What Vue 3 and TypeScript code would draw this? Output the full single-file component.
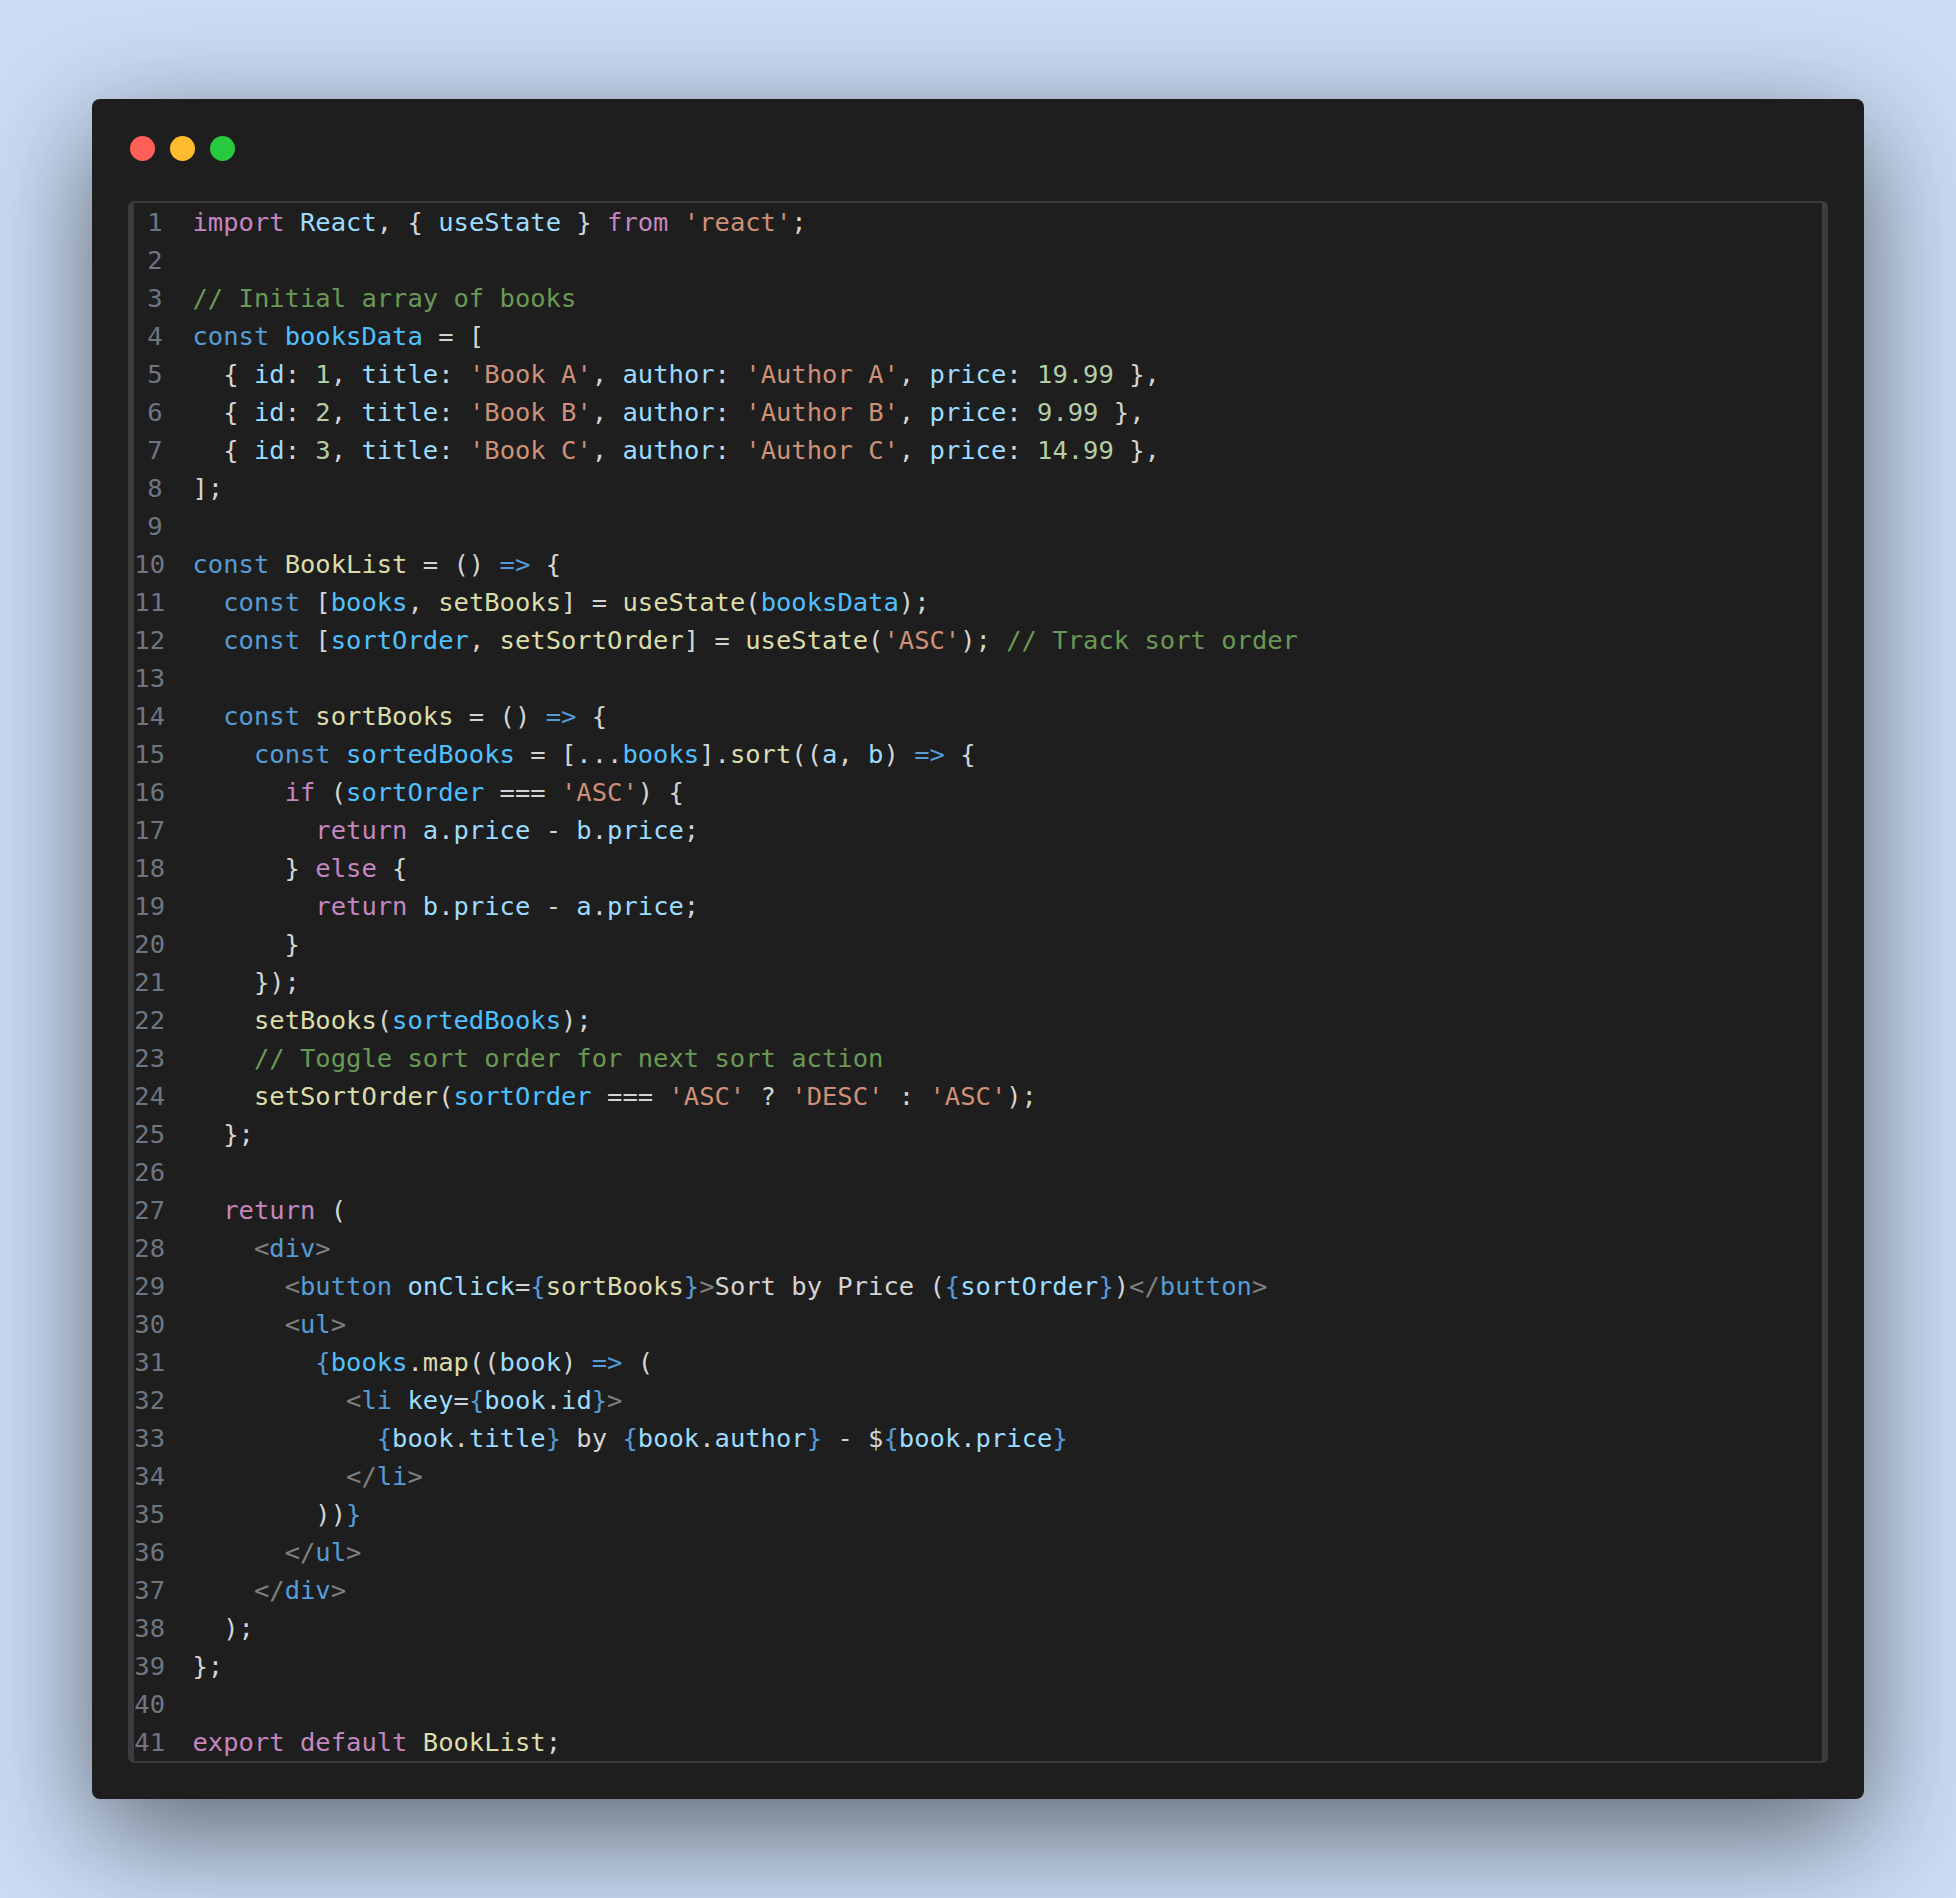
<script setup lang="ts">
type Tok = { c: string; t: string }

const source: string[] = [
  "‹k:import› ‹p:React›, { ‹p:useState› } ‹k:from› ‹s:'react'›;",
  "",
  "‹m:// Initial array of books›",
  "‹b:const› ‹c:booksData› = [",
  "  { ‹p:id›: ‹n:1›, ‹p:title›: ‹s:'Book A'›, ‹p:author›: ‹s:'Author A'›, ‹p:price›: ‹n:19.99› },",
  "  { ‹p:id›: ‹n:2›, ‹p:title›: ‹s:'Book B'›, ‹p:author›: ‹s:'Author B'›, ‹p:price›: ‹n:9.99› },",
  "  { ‹p:id›: ‹n:3›, ‹p:title›: ‹s:'Book C'›, ‹p:author›: ‹s:'Author C'›, ‹p:price›: ‹n:14.99› },",
  "];",
  "",
  "‹b:const› ‹f:BookList› = () ‹b:=>› {",
  "  ‹b:const› [‹c:books›, ‹f:setBooks›] = ‹f:useState›(‹c:booksData›);",
  "  ‹b:const› [‹c:sortOrder›, ‹f:setSortOrder›] = ‹f:useState›(‹s:'ASC'›); ‹m:// Track sort order›",
  "",
  "  ‹b:const› ‹f:sortBooks› = () ‹b:=>› {",
  "    ‹b:const› ‹c:sortedBooks› = [...‹c:books›].‹f:sort›((‹p:a›, ‹p:b›) ‹b:=>› {",
  "      ‹k:if› (‹c:sortOrder› === ‹s:'ASC'›) {",
  "        ‹k:return› ‹p:a›.‹p:price› - ‹p:b›.‹p:price›;",
  "      } ‹k:else› {",
  "        ‹k:return› ‹p:b›.‹p:price› - ‹p:a›.‹p:price›;",
  "      }",
  "    });",
  "    ‹f:setBooks›(‹c:sortedBooks›);",
  "    ‹m:// Toggle sort order for next sort action›",
  "    ‹f:setSortOrder›(‹c:sortOrder› === ‹s:'ASC'› ? ‹s:'DESC'› : ‹s:'ASC'›);",
  "  };",
  "",
  "  ‹k:return› (",
  "    ‹g:<›‹b:div›‹g:>›",
  "      ‹g:<›‹b:button› ‹p:onClick›=‹b:{›‹f:sortBooks›‹b:}›‹g:>›Sort by Price (‹b:{›‹p:sortOrder›‹b:}›)‹g:</›‹b:button›‹g:>›",
  "      ‹g:<›‹b:ul›‹g:>›",
  "        ‹b:{›‹c:books›.‹f:map›((‹p:book›) ‹b:=>› (",
  "          ‹g:<›‹b:li› ‹p:key›=‹b:{›‹p:book›.‹p:id›‹b:}›‹g:>›",
  "            ‹b:{›‹p:book›.‹p:title›‹b:}› by ‹b:{›‹p:book›.‹p:author›‹b:}› - $‹b:{›‹p:book›.‹p:price›‹b:}›",
  "          ‹g:</›‹b:li›‹g:>›",
  "        ))‹b:}›",
  "      ‹g:</›‹b:ul›‹g:>›",
  "    ‹g:</›‹b:div›‹g:>›",
  "  );",
  "};",
  "",
  "‹k:export› ‹k:default› ‹f:BookList›;",
]

function parse(line: string): Tok[] {
  const out: Tok[] = []
  const re = /‹(\w):([^›]*)›|([^‹]+)/g
  let m: RegExpExecArray | null
  while ((m = re.exec(line))) {
    if (m[1]) out.push({ c: m[1], t: m[2] })
    else out.push({ c: 't', t: m[3] })
  }
  return out
}

const lines = source.map(parse)
</script>

<template>
  <div class="page">
    <div class="window">
      <div class="dots">
        <span class="dot red"></span>
        <span class="dot yellow"></span>
        <span class="dot green"></span>
      </div>
      <div class="code">
        <div v-for="(line, i) in lines" :key="i" class="line">
          <span class="num" :class="{ single: i < 9 }">{{ i + 1 }}</span>
          <span class="src"><span v-for="(tok, j) in line" :key="j" :class="tok.c">{{ tok.t }}</span></span>
        </div>
      </div>
    </div>
  </div>
</template>

<style>
html, body {
  margin: 0;
  overflow: hidden;
}
</style>

<style scoped>
.page {
  box-sizing: border-box;
  height: 1898px;
  padding: 99px 92px;
  background: #cbdcf4;
  overflow: hidden;
}
.window {
  box-sizing: border-box;
  height: 1700px;
  padding: 37px 36px 36px;
  background: #1e1e1e;
  border-radius: 8px;
  box-shadow: 0 34px 116px rgba(0, 0, 0, 0.55);
}
.dots {
  display: flex;
  gap: 15px;
  padding-left: 1.5px;
  margin-bottom: 40px;
}
.dot {
  width: 25px;
  height: 25px;
  border-radius: 50%;
}
.red { background: #ff5f56; }
.yellow { background: #ffbd2e; }
.green { background: #27c93f; }
.code {
  border: solid #3c3c3c;
  border-width: 2px 6px;
  border-radius: 6px;
  font-family: "DejaVu Sans Mono", "Liberation Mono", monospace;
  font-size: 25.5px;
  line-height: 38px;
  color: #d4d4d4;
  white-space: pre;
}
.line {
  display: flex;
  height: 38px;
}
.num {
  box-sizing: border-box;
  width: 31px;
  margin-right: 27.5px;
  text-align: right;
  color: #6e7681;
  flex: none;
}
.num.single {
  padding-right: 2.5px;
}
.k { color: #c586c0; }
.p { color: #9cdcfe; }
.s { color: #ce9178; }
.m { color: #6a9955; }
.b { color: #569cd6; }
.c { color: #4fc1ff; }
.f { color: #dcdcaa; }
.n { color: #b5cea8; }
.g { color: #808080; }
</style>
